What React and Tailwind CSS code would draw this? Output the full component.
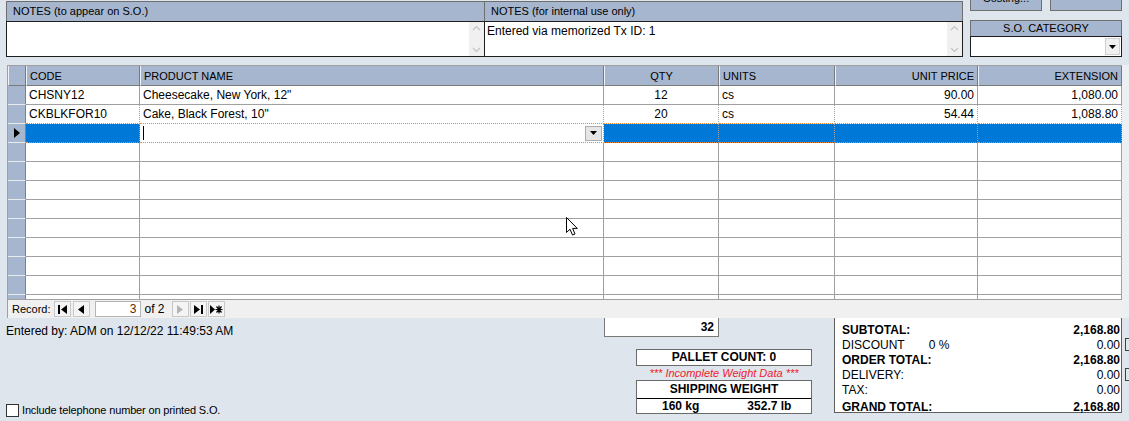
import React from "react";

const HEAD = "bg-[#a6b6cf]";

const rows = [
    { code: "CHSNY12", name: 'Cheesecake, New York, 12"', qty: "12", units: "cs", price: "90.00", ext: "1,080.00" },
    { code: "CKBLKFOR10", name: 'Cake, Black Forest, 10"', qty: "20", units: "cs", price: "54.44", ext: "1,088.80" },
];

const ScrollArrows = () => (
    <div className="w-[15px] h-full bg-[#f0f0f0] flex flex-col items-center justify-between py-[3px]">
        <svg width="9" height="6" viewBox="0 0 9 6"><path d="M1 5 L4.5 1.5 L8 5" fill="none" stroke="#c3c3c3" strokeWidth="1.2" /></svg>
        <svg width="9" height="6" viewBox="0 0 9 6"><path d="M1 1 L4.5 4.5 L8 1" fill="none" stroke="#c3c3c3" strokeWidth="1.2" /></svg>
    </div>
);

const NotesPanel = ({ title, text, className = "" }) => (
    <div className={`w-[479px] flex flex-col ${className}`}>
        <div className={`h-[20px] ${HEAD} border border-b-0 border-[#6e6e6e] pl-[6px] text-[11px] leading-[18px]`}>
            {title}
        </div>
        <div className="h-[36px] bg-white border border-[#1e1e1e] flex">
            <div className="flex-1 pl-[2px] pt-[2px] text-[12px] leading-[15px]">{text}</div>
            <ScrollArrows />
        </div>
    </div>
);

const DownArrow = () => (
    <svg width="7" height="4" viewBox="0 0 7 4"><path d="M0 0 H7 L3.5 4 Z" fill="#000" /></svg>
);

const NavBtn = ({ children }) => (
    <div className="w-[17px] h-[16px] bg-[#f4f4f4] border border-[#c8c8c8] flex items-center justify-center">
        {children}
    </div>
);

const cols = "grid grid-cols-[18px_114px_464px_115px_116px_143px_144px]";
const cell = "border-r border-b border-[#a0a0a0] h-[19px] text-[12px] leading-[18px] px-[3px] whitespace-nowrap overflow-hidden";

function GridRow({ r, index }) {
    const beforeSel = index === 1;
    const sel = index === 2;
    const bb = beforeSel || sel ? "border-b-[#e8883a] border-dotted" : "";
    if (sel) {
        return (
            <div className={cols}>
                <div className={`${HEAD} border-r border-b border-r-[#808080] border-b-[#e8ecf2] h-[19px] flex items-center justify-center`}>
                    <svg width="6" height="10" viewBox="0 0 6 10"><path d="M0 0 L6 5 L0 10 Z" fill="#000" /></svg>
                </div>
                <div className={`${cell} bg-[#0078d7] border-dotted border-b-[#e8883a]`}></div>
                <div className={`${cell} bg-white border-dotted border-b-[#e8883a] flex items-center justify-between pr-[1px]`}>
                    <div className="w-px h-[14px] bg-black"></div>
                    <div className="w-[17px] h-[15px] bg-[#e6e6e6] border border-[#adadad] flex items-center justify-center">
                        <DownArrow />
                    </div>
                </div>
                <div className={`${cell} bg-[#0078d7] border-dotted border-b-[#e8883a]`}></div>
                <div className={`${cell} bg-[#0078d7] border-dotted border-b-[#e8883a]`}></div>
                <div className={`${cell} bg-[#0078d7] border-dotted border-b-[#e8883a]`}></div>
                <div className={`${cell} bg-[#0078d7] border-dotted border-b-[#e8883a]`}></div>
            </div>
        );
    }
    return (
        <div className={cols}>
            <div className={`${HEAD} border-r border-b border-r-[#808080] border-b-[#e8ecf2] h-[19px]`}></div>
            <div className={`${cell} bg-white ${bb}`}>{r?.code}</div>
            <div className={`${cell} bg-white ${bb}`}>{r?.name}</div>
            <div className={`${cell} bg-white text-center ${bb}`}>{r?.qty}</div>
            <div className={`${cell} bg-white ${bb}`}>{r?.units}</div>
            <div className={`${cell} bg-white text-right ${bb}`}>{r?.price}</div>
            <div className={`${cell} bg-white text-right ${bb}`}>{r?.ext}</div>
        </div>
    );
}

const hcell = `${HEAD} border-l border-l-[#eef1f6] border-r border-r-[#7a7a7a] border-b border-b-[#7a7a7a] h-[20px] text-[11px] leading-[20px] px-[3px] whitespace-nowrap`;

const TotalRow = ({ label, value, bold, extra }) => (
    <div className={`h-[15px] flex justify-between text-[12px] leading-[15px] ${bold ? "font-bold" : ""}`}>
        <span>
            {label}
            {extra && <span className="ml-[24px]">{extra}</span>}
        </span>
        <span>{value}</span>
    </div>
);

export default function App() {
    const body = [];
    for (let i = 0; i < 12; i++) body.push(<GridRow key={i} r={rows[i]} index={i} />);

    return (
        <div className="relative w-[1129px] h-[421px] overflow-hidden bg-[#dfe5ec] text-black font-['Liberation_Sans',Arial,sans-serif]">
            {/* top notes area */}
            <div className="flex items-start h-[57px] pt-[1px] pl-[6px]">
                <NotesPanel title="NOTES (to appear on S.O.)" text="" />
                <NotesPanel title="NOTES (for internal use only)" text="Entered via memorized Tx ID: 1" className="-ml-px" />
                <div className="ml-[7px] w-[152px] flex flex-col">
                    <div className="flex justify-between -mt-[12px] h-[22px]">
                        <div className={`w-[72px] ${HEAD} border border-[#707070] text-[11px] leading-[17px] text-center`}>Costing...</div>
                        <div className={`w-[72px] ${HEAD} border border-[#707070]`}></div>
                    </div>
                    <div className={`mt-[9px] h-[16px] ${HEAD} border border-b-0 border-[#707070] text-[11px] leading-[15px] text-center`}>
                        S.O. CATEGORY
                    </div>
                    <div className="h-[21px] bg-white border border-[#1e1e1e] flex items-center justify-end pr-[1px]">
                        <div className="w-[15px] h-[17px] bg-[#f0f0f0] border border-[#d0d0d0] flex items-center justify-center">
                            <DownArrow />
                        </div>
                    </div>
                </div>
            </div>

            {/* grid */}
            <div className="flex mt-[8px] pl-[7px]">
                <div className="w-[1115px] border-l border-t border-[#a0a0a0] flex flex-col">
                    <div className={cols}>
                        <div className={`${hcell}`}></div>
                        <div className={hcell}>CODE</div>
                        <div className={hcell}>PRODUCT NAME</div>
                        <div className={`${hcell} text-center`}>QTY</div>
                        <div className={hcell}>UNITS</div>
                        <div className={`${hcell} text-right`}>UNIT PRICE</div>
                        <div className={`${hcell} text-right`}>EXTENSION</div>
                    </div>
                    <div className="h-[213px] overflow-hidden">{body}</div>
                    <div className="h-[19px] bg-[#f0f0f0] border-t border-[#a0a0a0] flex items-center text-[11px] pl-[4px]">
                        <span className="mr-[3px]">Record:</span>
                        <NavBtn>
                            <svg width="9" height="9" viewBox="0 0 9 9"><rect x="0" y="0" width="2" height="9" fill="#000" /><path d="M9 0 L3 4.5 L9 9 Z" fill="#000" /></svg>
                        </NavBtn>
                        <div className="ml-[2px]">
                            <NavBtn>
                                <svg width="6" height="9" viewBox="0 0 6 9"><path d="M6 0 L0 4.5 L6 9 Z" fill="#000" /></svg>
                            </NavBtn>
                        </div>
                        <div className="ml-[5px] w-[46px] h-[16px] bg-white border border-[#b5b5b5] text-right pr-[3px] text-[12px] leading-[14px] text-[#5a2a00]">3</div>
                        <span className="ml-[4px] text-[12px]">of 2</span>
                        <div className="ml-[7px]">
                            <NavBtn>
                                <svg width="6" height="9" viewBox="0 0 6 9"><path d="M0 0 L6 4.5 L0 9 Z" fill="#b4b4b4" /></svg>
                            </NavBtn>
                        </div>
                        <div className="ml-[1px]">
                            <NavBtn>
                                <svg width="9" height="9" viewBox="0 0 9 9"><path d="M0 0 L6 4.5 L0 9 Z" fill="#000" /><rect x="7" y="0" width="2" height="9" fill="#000" /></svg>
                            </NavBtn>
                        </div>
                        <div className="ml-[1px]">
                            <NavBtn>
                                <svg width="13" height="9" viewBox="0 0 13 9"><path d="M0 0 L5 4.5 L0 9 Z" fill="#000" /><path d="M9 0.5 V8.5 M5.5 4.5 H12.5 M6.5 1.5 L11.5 7.5 M11.5 1.5 L6.5 7.5" stroke="#000" strokeWidth="1.2" /></svg>
                            </NavBtn>
                        </div>
                    </div>
                </div>
                <div className="w-[7px] bg-[#edf0f3]"></div>
            </div>

            {/* footer */}
            <div className="flex h-[103px]">
                <div className="w-[604px] flex flex-col justify-between pl-[6px] pt-[6px] pb-[4px]">
                    <div className="text-[12px] leading-[15px]">Entered by: ADM on 12/12/22 11:49:53 AM</div>
                    <div className="flex items-center">
                        <div className="w-[13px] h-[13px] bg-white border border-[#333]"></div>
                        <span className="ml-[3px] text-[11px] leading-[13px] tracking-[-0.15px]">Include telephone number on printed S.O.</span>
                    </div>
                </div>
                <div className="w-[230px] flex flex-col">
                    <div className="w-[115px] h-[19px] bg-white border-x border-b border-[#7a7a7a] text-right pr-[4px] text-[12px] font-bold leading-[18px]">32</div>
                    <div className="ml-[32px] mt-[12px] w-[176px] flex flex-col">
                        <div className="h-[17px] bg-white border border-[#6a6a6a] text-center text-[12px] font-bold leading-[15px]">PALLET COUNT: 0</div>
                        <div className="h-[14px] text-center text-[11px] italic leading-[14px] text-[#f0202c]">*** Incomplete Weight Data ***</div>
                        <div className="h-[34px] bg-white border border-[#6a6a6a] flex flex-col">
                            <div className="h-[18px] border-b border-black text-center text-[12px] font-bold leading-[17px]">SHIPPING WEIGHT</div>
                            <div className="flex-1 flex text-[12px] font-bold leading-[14px]">
                                <span className="ml-[25px]">160 kg</span>
                                <span className="ml-[48px]">352.7 lb</span>
                            </div>
                        </div>
                    </div>
                </div>
                <div className="w-[288px] h-[95px] bg-white border-x border-b border-[#5e5e5e] flex flex-col pt-[5px]">
                    <div className="px-[7px] pr-[1px]">
                        <TotalRow label="SUBTOTAL:" value="2,168.80" bold />
                        <TotalRow label="DISCOUNT" extra="0 %" value="0.00" />
                        <TotalRow label="ORDER TOTAL:" value="2,168.80" bold />
                        <TotalRow label="DELIVERY:" value="0.00" />
                        <TotalRow label="TAX:" value="0.00" />
                    </div>
                    <div className="h-px bg-black -ml-[2px] mt-[2px]"></div>
                    <div className="px-[7px] pr-[1px]">
                        <TotalRow label="GRAND TOTAL:" value="2,168.80" bold />
                    </div>
                </div>
                <div className="flex flex-col pl-[3px] pt-[20px]">
                    <div className="w-[4px] h-[13px] border-l border-y border-[#404040]"></div>
                    <div className="w-[4px] h-[13px] mt-[17px] border-l border-y border-[#404040]"></div>
                </div>
            </div>

            {/* mouse pointer */}
            <svg className="absolute left-[566px] top-[217px]" width="13" height="20" viewBox="0 0 13 20">
                <path d="M0.5 0.5 L0.5 15.5 L4 12.2 L6.5 18 L9 17 L6.6 11.4 L11.3 11.4 Z" fill="#fff" stroke="#000" strokeWidth="1" />
            </svg>
        </div>
    );
}
